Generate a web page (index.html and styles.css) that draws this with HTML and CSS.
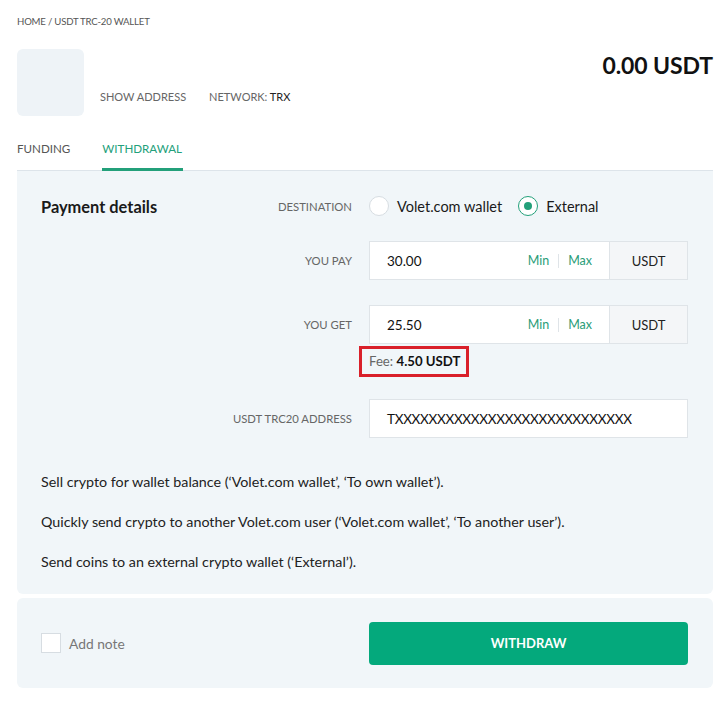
FILE: index.html
```html
<!DOCTYPE html>
<html>
<head>
<meta charset="utf-8">
<link rel="stylesheet" href="styles.css">
</head>
<body>
<div class="page">
  <div class="crumbs">HOME / USDT TRC-20 WALLET</div>
  <div class="head">
    <div class="logo"></div>
    <div class="meta">
      <span class="meta-item">SHOW ADDRESS</span>
      <span class="meta-item">NETWORK: <b>TRX</b></span>
    </div>
    <div class="balance">0.00 USDT</div>
  </div>
  <div class="tabs">
    <span class="tab">FUNDING</span>
    <span class="tab active">WITHDRAWAL</span>
  </div>
  <div class="panel">
    <div class="row row-dest">
      <div class="lab lab-split"><span class="title">Payment details</span><span>DESTINATION</span></div>
      <div class="radios">
        <span class="radio"><span class="circle"></span>Volet.com wallet</span>
        <span class="radio"><span class="circle on"></span>External</span>
      </div>
    </div>
    <div class="row">
      <div class="lab">YOU PAY</div>
      <div class="field">
        <div class="input"><span class="val">30.00</span><span class="mm">Min</span><span class="sep"></span><span class="mm">Max</span></div>
        <div class="cur">USDT</div>
      </div>
    </div>
    <div class="row row-get">
      <div class="lab">YOU GET</div>
      <div class="getcol">
        <div class="field">
          <div class="input"><span class="val">25.50</span><span class="mm">Min</span><span class="sep"></span><span class="mm">Max</span></div>
          <div class="cur">USDT</div>
        </div>
        <div class="fee">Fee: <b>4.50 USDT</b></div>
      </div>
    </div>
    <div class="row row-addr">
      <div class="lab">USDT TRC20 ADDRESS</div>
      <div class="addr">TXXXXXXXXXXXXXXXXXXXXXXXXXXXX</div>
    </div>
    <div class="notes">
      <p>Sell crypto for wallet balance (‘Volet.com wallet’, ‘To own wallet’).</p>
      <p>Quickly send crypto to another Volet.com user (‘Volet.com wallet’, ‘To another user’).</p>
      <p>Send coins to an external crypto wallet (‘External’).</p>
    </div>
  </div>
  <div class="footer">
    <label class="check"><span class="box"></span>Add note</label>
    <button class="btn">WITHDRAW</button>
  </div>
</div>
</body>
</html>
```
FILE: styles.css
```css
* { box-sizing: border-box; }
html, body { margin: 0; padding: 0; background: #fff; }
body { font-family: Lato, "Open Sans", sans-serif; color: #1a1a1a; }
.page { padding: 15px 13px 0 17px; }
.crumbs { font-size: 9.6px; color: #555; letter-spacing: -0.2px; height: 14px; line-height: 14px; }
.head { display: flex; align-items: flex-start; margin-top: 20px; height: 67px; }
.logo { width: 67px; height: 67px; background: #eef3f7; border-radius: 6px; flex: none; }
.meta { display: flex; gap: 23px; align-self: flex-end; margin: 0 0 13px 16px; font-size: 11px; color: #666; }
.meta b { font-weight: 400; color: #222; }
.balance { margin-left: auto; font-size: 23px; font-weight: 700; color: #111; margin-top: 2px; letter-spacing: -0.1px; }
.tabs { display: flex; gap: 32px; margin-top: 23px; border-bottom: 1px solid #dde4ea; height: 32px; }
.tab { font-size: 11.6px; color: #555; font-weight: 400; height: 32px; line-height: 17px; padding-top: 1px; }
.tab.active { color: #23a07a; border-bottom: 3px solid #23a07a; padding-right: 1px; }
.panel { background: #f1f6f9; padding: 25px 25px 22px 24px; border-radius: 0 0 6px 6px; }
.row { display: grid; grid-template-columns: 1fr 319px; column-gap: 17px; align-items: center; }
.lab { text-align: right; font-size: 11.3px; color: #666; }
.lab-split { display: flex; justify-content: space-between; align-items: center; text-align: left; }
.title { font-size: 16.4px; font-weight: 700; color: #1a1a1a; }
.row-dest { height: 20px; }
.radios { display: flex; gap: 16px; font-size: 14.5px; color: #1a1a1a; }
.radio { display: flex; align-items: center; gap: 8px; }
.circle { width: 20px; height: 20px; border-radius: 50%; background: #fff; border: 1px solid #d7dde2; position: relative; }
.circle.on { border-color: #23a07a; }
.circle.on::after { content: ""; position: absolute; left: 5px; top: 5px; width: 8px; height: 8px; border-radius: 50%; background: #23a07a; }
.row + .row { margin-top: 25px; }
.field { display: flex; height: 39px; }
.input { flex: none; width: 240px; background: #fff; border: 1px solid #dfe4e8; border-right: none; display: flex; align-items: center; padding: 0 17px 0 17px; font-size: 13.5px; }
.val { flex: 1; color: #111; }
.mm { color: #2a9d78; font-size: 12.5px; }
.sep { width: 1px; height: 14px; background: #dfe4e8; margin: 0 9px; }
.cur { flex: 1; background: #f4f6f8; border: 1px solid #dfe4e8; display: flex; align-items: center; justify-content: center; font-size: 13px; color: #222; }
.row-get { align-items: start; }
.row-get .lab { height: 39px; line-height: 39px; }
.getcol { display: flex; flex-direction: column; }
.fee { align-self: flex-start; margin: 2px 0 0 -10px; padding: 5px 6px 5px 7px; border: 3px solid #d9202a; font-size: 13.2px; color: #666; line-height: 15px; }
.fee b { color: #111; font-weight: 700; }
.row-addr { margin-top: 22px !important; }
.addr { height: 39px; background: #fff; border: 1px solid #dfe4e8; display: flex; align-items: center; padding-left: 17px; font-size: 13.5px; color: #111; letter-spacing: -0.3px; }
.notes { margin-top: 34px; font-size: 14.3px; color: #222; }
.notes p { margin: 0; line-height: 20px; }
.notes p + p { margin-top: 20px; }
.footer { margin-top: 4px; background: #f1f6f9; border-radius: 6px; height: 90px; display: flex; align-items: center; justify-content: space-between; padding: 0 25px 0 24px; }
.check { display: flex; align-items: center; gap: 8px; font-size: 13.8px; color: #777; }
.box { width: 20px; height: 20px; background: #fff; border: 1px solid #d7dde2; }
.btn { width: 319px; height: 43px; background: #04a97c; color: #fff; border: none; border-radius: 4px; font-family: inherit; font-size: 13px; font-weight: 700; }
```
